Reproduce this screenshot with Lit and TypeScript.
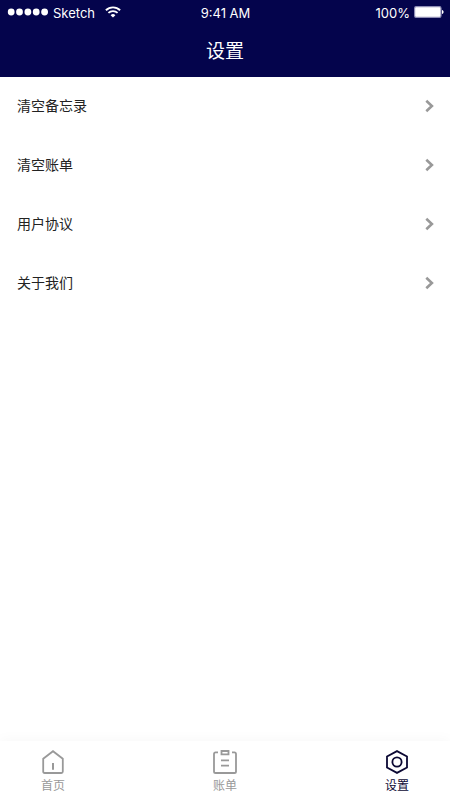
import { LitElement, html, css, svg } from "lit";
import { customElement, property, state } from "lit/decorators.js";
import { classMap } from "lit/directives/class-map.js";

@customElement("status-bar")
class StatusBar extends LitElement {
  static styles = css`
    :host {
      display: grid;
      grid-template-columns: 1fr auto 1fr;
      align-items: center;
      height: 26px;
      padding: 0 6px 0 7px;
      font: 13px/26px Inter, "Liberation Sans", sans-serif;
      color: #fff;
    }
    .side {
      display: flex;
      align-items: center;
    }
    .end {
      justify-content: flex-end;
      gap: 4px;
    }
    svg {
      display: block;
      flex: none;
      margin-bottom: 2px;
    }
    .carrier {
      margin: 0 10px 0 4px;
    }
  `;
  render() {
    return html`
      <div class="side">
        <svg width="42" height="8" viewBox="0 0 42 8" fill="#fff">
          ${[4.2, 12.5, 20.9, 29.2, 37.6].map((x) => svg`<circle cx=${x} cy="4" r="3.4" />`)}
        </svg>
        <span class="carrier">Sketch</span>
        <svg width="16" height="12" viewBox="0 0 16 12" fill="none" stroke="#fff">
          <path d="M.9 4.3a10.2 10.2 0 0 1 14.2 0" stroke-width="1.9" />
          <path d="M3.4 6.9a6.6 6.6 0 0 1 9.2 0" stroke-width="1.8" />
          <path d="M8 11.6 5.6 9.2a3.5 3.5 0 0 1 4.8 0z" fill="#fff" stroke="none" />
        </svg>
      </div>
      <span>9:41 AM</span>
      <div class="side end">
        <span>100%</span>
        <svg width="30" height="12" viewBox="0 0 30 12">
          <rect x=".6" y=".6" width="26.4" height="10.8" rx="1.6" fill="#fff" stroke="#8e8db5" stroke-width="1.2" />
          <path d="M28 4c2.1.5 2.1 3.5 0 4z" fill="#fff" />
        </svg>
      </div>
    `;
  }
}

@customElement("settings-row")
class SettingsRow extends LitElement {
  @property() label = "";
  static styles = css`
    :host {
      display: block;
    }
    button {
      display: flex;
      align-items: center;
      justify-content: space-between;
      width: 100%;
      height: 59px;
      padding: 0 16px 2px 17px;
      border: 0;
      background: none;
      color: #222;
      font: 14px/20px "Noto Sans CJK SC", sans-serif;
      cursor: pointer;
    }
    span {
      padding-bottom: 2px;
    }
    svg {
      display: block;
    }
  `;
  render() {
    return html`<button type="button">
      <span>${this.label}</span>
      <svg width="9" height="14" viewBox="0 0 9 14" fill="none" stroke="#999" stroke-width="2.6" aria-hidden="true">
        <path d="M1.3 1.7 6.9 7 1.3 12.3" />
      </svg>
    </button>`;
  }
}

const icons = {
  home: svg`<path d="M2.2 8.7 12 1.2l9.8 7.500v12.900q0 1.400-1.400 1.400H3.600q-1.400 0-1.400-1.400z" /><path d="M12 13v6.700" stroke-width="2" />`,
  bill: svg`<path d="M5 2.400H2.600q-1.600 0-1.600 1.600v17.400Q1 23 2.600 23h18.800q1.600 0 1.600-1.600V4q0-1.600-1.600-1.600H19" /><path d="M8.500 1h7v3.400h-7zM8 10.400h8M8 15.700h8" />`,
  settings: svg`<path d="M12 1.100 22 6.500v11L12 22.900 2 17.500v-11z" /><circle cx="12" cy="12" r="4.600" />`,
};
type TabId = keyof typeof icons;

@customElement("tab-bar")
class TabBar extends LitElement {
  @state() private current: TabId = "settings";
  private tabs: { id: TabId; label: string }[] = [
    { id: "home", label: "首页" },
    { id: "bill", label: "账单" },
    { id: "settings", label: "设置" },
  ];
  static styles = css`
    nav {
      display: flex;
      justify-content: space-between;
      padding: 0 17px;
      background: #fff;
      box-shadow: 0 0 14px rgba(0, 0, 0, 0.04);
    }
    button {
      display: flex;
      flex-direction: column;
      align-items: center;
      gap: 2px;
      width: 72px;
      height: 59px;
      padding: 9px 0 0;
      border: 0;
      background: none;
      color: #999;
      font: 12px/18px "Noto Sans CJK SC", sans-serif;
      cursor: pointer;
    }
    .active {
      color: #0b0833;
    }
    svg {
      display: block;
    }
  `;
  render() {
    return html`<nav>
      ${this.tabs.map(
        (t) => html`<button
          type="button"
          class=${classMap({ active: t.id === this.current })}
          @click=${() => (this.current = t.id)}
        >
          <svg width="24" height="24" viewBox="0 0 24 24" fill="none" stroke="currentColor" stroke-width="1.8" aria-hidden="true">
            ${icons[t.id]}
          </svg>
          <span>${t.label}</span>
        </button>`
      )}
    </nav>`;
  }
}

@customElement("app-root")
class AppRoot extends LitElement {
  static styles = css`
    :host {
      display: flex;
      flex-direction: column;
      min-height: 100vh;
      background: #fff;
    }
    header {
      background: #04044c;
    }
    h1 {
      margin: 0;
      height: 51px;
      color: #fff;
      text-align: center;
      font: 400 19px/48px "Noto Sans CJK SC", sans-serif;
    }
    main {
      flex: 1;
    }
    tab-bar {
      display: block;
      position: sticky;
      bottom: 0;
    }
  `;
  render() {
    return html`
      <header>
        <status-bar></status-bar>
        <h1>设置</h1>
      </header>
      <main>
        ${["清空备忘录", "清空账单", "用户协议", "关于我们"].map(
          (label) => html`<settings-row .label=${label}></settings-row>`
        )}
      </main>
      <tab-bar></tab-bar>
    `;
  }
}
